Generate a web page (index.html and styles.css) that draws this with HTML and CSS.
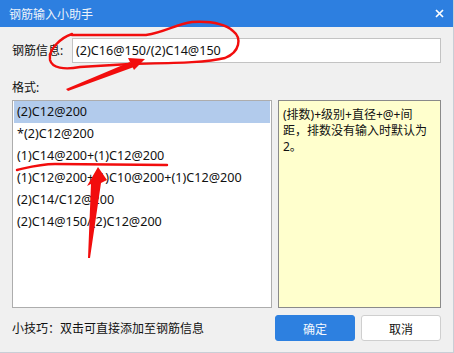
FILE: index.html
```html
<!DOCTYPE html>
<html lang="zh-CN">
<head>
    <meta charset="UTF-8">
    <title>钢筋输入小助手</title>
    <link rel="stylesheet" href="styles.css">
</head>
<body>
    <div class="window">
        <div class="titlebar">
            <span class="title">钢筋输入小助手</span>
            <svg class="close" width="9" height="9" viewBox="0 0 9 9">
                <path d="M1 1 L8 8 M8 1 L1 8" stroke="#fff" stroke-width="1.7"/>
            </svg>
        </div>

        <div class="content">
            <div class="info-row">
                <label class="info-label">钢筋信息:</label>
                <div class="info-input">(2)C16@150/(2)C14@150</div>
            </div>

            <div class="format-label">格式:</div>

            <div class="panels">
                <ul class="format-list">
                    <li class="selected">(2)C12@200</li>
                    <li>*(2)C12@200</li>
                    <li>(1)C14@200+(1)C12@200</li>
                    <li>(1)C12@200+(1)C10@200+(1)C12@200</li>
                    <li>(2)C14/C12@200</li>
                    <li>(2)C14@150/(2)C12@200</li>
                </ul>
                <div class="hint-box">(排数)+级别+直径+@+间距，排数没有输入时默认为2。</div>
            </div>

            <div class="footer">
                <span class="tip">小技巧：双击可直接添加至钢筋信息</span>
                <button class="btn btn-primary">确定</button>
                <button class="btn">取消</button>
            </div>
        </div>

        <!-- hand-drawn red marks on top of the dialog -->
        <svg class="marks" width="454" height="353" viewBox="0 0 454 353">
            <path d="M72 34 C60 38 48 50 50 60 C52 68 64 70 80 67 L130 64 C170 63 205 63 225 58 C240 52 242 38 233 31 C224 23 210 21 192 22 C176 24 166 32 146 35 L72 35"
                  fill="none" stroke="#f20d0d" stroke-width="2.4" stroke-linecap="round"/>
            <polygon points="66,89 130,62 134,67 68,91" fill="#f20d0d"/>
            <polygon points="145,59 128,58 134,70" fill="#f20d0d"/>
            <path d="M17 170 C30 167 40 164 55 164 L167 165" fill="none" stroke="#f20d0d" stroke-width="2.4" stroke-linecap="round"/>
            <polygon points="88,258 91,184 87,186 98,167 107,180 101,183 90,258" fill="#f20d0d"/>
        </svg>
    </div>
</body>
</html>
```

FILE: styles.css
```css
body {
    margin: 0;
    font-family: "Noto Sans", "Noto Sans CJK SC", sans-serif;
    font-size: 12px;
    color: #111;
}
.window {
    position: relative;
    width: 453px;
    height: 352px;
    background: #f0f0f0;
    border-right: 1px solid #c9ced6;
    border-bottom: 1px solid #c9ced6;
}
.titlebar {
    height: 27px;
    background: #2d7fe0;
    display: flex;
    align-items: center;
    justify-content: space-between;
    padding: 0 9px 0 9px;
}
.title {
    color: #eef3fb;
    font-family: "Noto Sans CJK SC", sans-serif;
}
.content {
    padding: 11px 12px 0 12px;
}
.info-row {
    display: flex;
    align-items: center;
}
.info-label {
    width: 60px;
    line-height: 25px;
}
.info-input {
    flex: 1;
    height: 23px;
    line-height: 23px;
    background: #fff;
    border: 1px solid #c3c3c3;
    padding-left: 3px;
    font-size: 12.6px;
}
.format-label {
    margin-top: 17px;
    line-height: 16px;
}
.panels {
    display: flex;
    gap: 6px;
    margin-top: 4px;
    height: 208px;
}
.format-list {
    list-style: none;
    margin: 0;
    padding: 0 1px;
    width: 256px;
    background: #fff;
    border: 1px solid #adadad;
    font-size: 12.6px;
}
.format-list li {
    height: 22px;
    line-height: 22px;
    padding-left: 3px;
}
.format-list li.selected {
    background: #b2cbec;
}
.hint-box {
    flex: 1;
    background: #ffffcd;
    border: 1px solid #8a8a8a;
    padding: 6px 10px 0 4px;
    line-height: 16px;
}
.footer {
    display: flex;
    align-items: center;
    margin-top: 7px;
    height: 26px;
}
.tip {
    flex: 1;
}
.btn {
    width: 80px;
    height: 26px;
    margin-left: 6px;
    border: 1px solid #cfcfcf;
    border-radius: 3px;
    background: #fff;
    font-family: "Noto Sans CJK SC", sans-serif;
    font-size: 12px;
    color: #111;
}
.btn-primary {
    background: #2d80e0;
    border-color: #2d80e0;
    color: #f4f8fd;
}
.marks {
    position: absolute;
    top: 0;
    left: 0;
    pointer-events: none;
}
```
